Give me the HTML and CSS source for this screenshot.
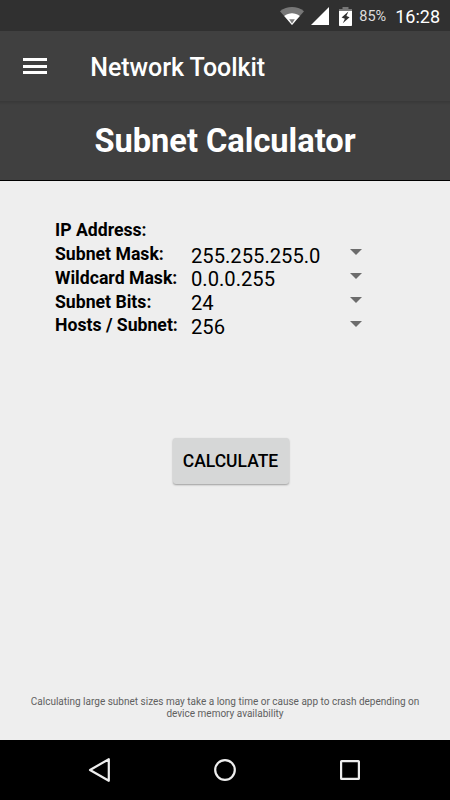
FILE: index.html
```
<!DOCTYPE html>
<html lang="en">
<head>
  <meta charset="UTF-8" />
  <meta name="viewport" content="width=device-width, initial-scale=1.0" />
  <title>Network Toolkit</title>
  <link rel="stylesheet" href="styles.css">
</head>
<body>
  <div class="status-bar">
    <svg class="wifi" width="24" height="18" viewBox="0 0 24 18">
      <path d="M0 4.2C7 -1.4 17 -1.4 24 4.2L12 18Z" fill="#777" />
      <path d="M4.2 9C9 5.2 15 5.2 19.8 9L12 18Z" fill="#fff" />
      <path d="M9.2 12.2h5.6L12 16.5Z" fill="#777" />
    </svg>
    <svg class="signal" width="18" height="18" viewBox="0 0 18 18">
      <path d="M18 0V18H0Z" fill="#fff" />
    </svg>
    <svg class="battery" width="13" height="19" viewBox="0 0 13 19">
      <path d="M3.5 0h6v2H13v3H0V2h3.5Z" fill="#777" />
      <path d="M0 4h13v14.2q0 .8-.8.8H.8Q0 19 0 18.2Z" fill="#fff" />
      <path d="M9.4 4.6L2.6 10.4L5.9 11.8L3.8 16.2L10.6 10.2L7.4 9Z" fill="#303030" />
    </svg>
    <span class="percent">85%</span>
    <span class="clock">16:28</span>
  </div>

  <header class="app-bar">
    <button class="menu" aria-label="Menu"><span></span><span></span><span></span></button>
    <span class="app-name">Network Toolkit</span>
  </header>

  <h1>Subnet Calculator</h1>

  <main>
    <div class="fields">
      <div class="row"><span class="label">IP Address:</span></div>
      <div class="row"><span class="label">Subnet Mask:</span><span class="value">255.255.255.0</span><span class="arrow"></span></div>
      <div class="row"><span class="label">Wildcard Mask:</span><span class="value">0.0.0.255</span><span class="arrow"></span></div>
      <div class="row"><span class="label">Subnet Bits:</span><span class="value">24</span><span class="arrow"></span></div>
      <div class="row"><span class="label">Hosts / Subnet:</span><span class="value">256</span><span class="arrow"></span></div>
    </div>

    <button class="calculate">CALCULATE</button>

    <p class="note">Calculating large subnet sizes may take a long time or cause app to crash depending on<br>device memory availability</p>
  </main>

  <nav class="nav-bar">
    <svg width="24" height="26" viewBox="0 0 24 26"><path d="M20.8 2.2V23.8L2 13Z" /></svg>
    <svg width="24" height="26" viewBox="0 0 24 26"><circle cx="12" cy="13" r="9.8" /></svg>
    <svg width="24" height="26" viewBox="0 0 24 26"><rect x="3.1" y="4.1" width="17.8" height="17.8" rx=".5" /></svg>
  </nav>
</body>
</html>
```

FILE: styles.css
```
* {
  box-sizing: border-box;
}

body {
  margin: 0;
  height: 800px;
  display: flex;
  flex-direction: column;
  overflow: hidden;
  font-family: Roboto, "Liberation Sans", sans-serif;
  background: #eee;
  color: #000;
}

button {
  font-family: inherit;
  border: none;
  padding: 0;
}

.status-bar {
  height: 31px;
  display: flex;
  align-items: center;
  justify-content: flex-end;
  padding-top: 1px;
  padding-right: 10px;
  background: #303030;
  color: #fff;
}

.signal {
  margin-left: 7px;
}

.battery {
  margin-left: 10px;
}

.percent {
  margin-left: 7px;
  font-size: 14.5px;
  color: #ddd;
}

.clock {
  margin-left: 9px;
  font-size: 18px;
}

.app-bar {
  height: 70px;
  display: flex;
  align-items: center;
  padding-left: 23px;
  background: #404040;
  color: #fff;
}

.menu {
  width: 24px;
  display: flex;
  flex-direction: column;
  gap: 3.5px;
  margin-right: 43.3px;
  background: none;
}

.menu span {
  height: 3px;
  background: #fff;
}

.app-name {
  font-size: 25px;
  font-weight: 500;
  letter-spacing: -0.07px;
  padding-top: 2px;
}

h1 {
  height: 80px;
  margin: 0;
  line-height: 80px;
  text-align: center;
  font-size: 32.6px;
  font-weight: 700;
  color: #fff;
  background: linear-gradient(#383838, #404040 4px);
  border-bottom: 1px solid #000;
}

main {
  flex: 1;
  display: flex;
  flex-direction: column;
  align-items: center;
  padding-top: 37.4px;
}

.fields {
  width: 450px;
  padding-left: 55px;
}

.row {
  height: 23.8px;
  display: flex;
  align-items: center;
}

.label {
  width: 136px;
  font-size: 17.65px;
  font-weight: 700;
}

.value {
  width: 159px;
  padding-top: 3px;
  font-size: 20.2px;
}

.arrow {
  border: 6px solid transparent;
  border-top-color: #6c6c6c;
  border-bottom: none;
  margin-bottom: 3.4px;
}

.calculate {
  width: 116px;
  height: 46px;
  margin: 100.6px 0 0 11px;
  border-radius: 3px;
  background: #d6d7d7;
  box-shadow: 0 1px 2px rgba(0, 0, 0, 0.35);
  font-size: 17.5px;
  font-weight: 500;
  color: #000;
}

.note {
  margin: auto 0 20px;
  text-align: center;
  font-size: 10px;
  line-height: 12px;
  color: #606060;
}

.nav-bar {
  height: 60px;
  display: flex;
  align-items: center;
  justify-content: center;
  gap: 101px;
  background: #000;
}

.nav-bar svg {
  fill: none;
  stroke: #eee;
  stroke-width: 2.2;
  stroke-linejoin: round;
}
```
